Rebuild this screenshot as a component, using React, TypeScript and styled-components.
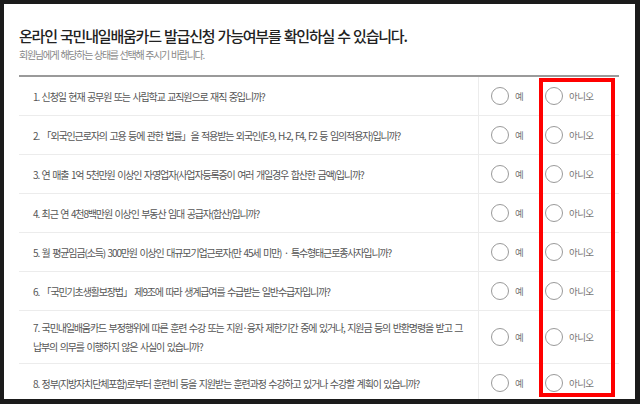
import styled, { createGlobalStyle } from 'styled-components';

const GlobalStyle = createGlobalStyle`
   html, body {
      margin: 0;
      padding: 0;
      background: #1b1b1b;
   }
   body {
      font-family: 'Noto Sans CJK KR', 'Noto Sans', sans-serif;
   }
`;

const questions: string[][] = [
   ['1. 신청일 현재 공무원 또는 사립학교 교직원으로 재직 중입니까?'],
   ['2. 「외국인근로자의 고용 등에 관한 법률」을 적용받는 외국인(E-9, H-2, F4, F2 등 임의적용자)입니까?'],
   ['3. 연 매출 1억 5천만원 이상인 자영업자(사업자등록증이 여러 개일경우 합산한 금액)입니까?'],
   ['4. 최근 연 4천8백만원 이상인 부동산 임대 공급자(합산)입니까?'],
   ['5. 월 평균임금(소득) 300만원 이상인 대규모기업근로자(만 45세 미만) · 특수형태근로종사자입니까?'],
   ['6. 「국민기초생활보장법」 제9조에 따라 생계급여를 수급받는 일반수급자입니까?'],
   [
      '7. 국민내일배움카드 부정행위에 따른 훈련 수강 또는 지원·융자 제한기간 중에 있거나, 지원금 등의 반환명령을 받고 그',
      '납부의 의무를 이행하지 않은 사실이 있습니까?',
   ],
   ['8. 정부(지방자치단체포함)로부터 훈련비 등을 지원받는 훈련과정 수강하고 있거나 수강할 계획이 있습니까?'],
];

const App = () => {
   return (
      <>
         <GlobalStyle />
         <Panel>
            <Title>온라인 국민내일배움카드 발급신청 가능여부를 확인하실 수 있습니다.</Title>
            <SubTitle>회원님에게 해당하는 상태를 선택해 주시기 바랍니다.</SubTitle>
            <List>
               {questions.map((lines, i) => (
                  <Row key={i}>
                     <Question>
                        <QuestionText>
                           {lines.map((line, j) => (
                              <span key={j}>
                                 {j > 0 && <br />}
                                 {line}
                              </span>
                           ))}
                        </QuestionText>
                     </Question>
                     <Choice $pad={12}>
                        <Circle />
                        <ChoiceLabel>예</ChoiceLabel>
                     </Choice>
                     <Choice $pad={6}>
                        <Circle />
                        <ChoiceLabel>아니오</ChoiceLabel>
                     </Choice>
                  </Row>
               ))}
            </List>
            <Highlight />
         </Panel>
      </>
   );
};
export default App;

const Panel = styled.div`
   position: relative;
   box-sizing: border-box;
   width: 631px;
   height: 395px;
   margin: 4px 0 0 4px;
   padding: 22px 16px 0 15px;
   background: #fff;
   overflow: hidden;
`;

const Title = styled.h1`
   margin: 0;
   font-size: 15px;
   line-height: 20px;
   font-weight: 500;
   letter-spacing: -1.2px;
   word-spacing: 1px;
   color: #222;
`;

const SubTitle = styled.p`
   margin: 2px 0 0;
   font-size: 10px;
   line-height: 14px;
   letter-spacing: -1.3px;
   word-spacing: 1px;
   color: #888;
`;

const List = styled.div`
   margin-top: 13px;
   border-top: 2px solid #9a9a9a;
`;

const Row = styled.div`
   display: grid;
   grid-template-columns: 460px 60px 80px;
   min-height: 38px;
   border-bottom: 1px solid #ececec;
`;

const Question = styled.div`
   display: flex;
   align-items: center;
   min-width: 0;
   padding: 7px 6px 7px 14px;
   border-right: 1px solid #ececec;
`;

const QuestionText = styled.p`
   margin: 0;
   font-size: 10px;
   line-height: 19px;
   letter-spacing: -1.15px;
   word-spacing: 1.5px;
   color: #555;
   white-space: nowrap;
`;

const Choice = styled.div<{ $pad: number }>`
   display: flex;
   align-items: center;
   gap: 6px;
   padding-left: ${p => p.$pad}px;
`;

const Circle = styled.span`
   box-sizing: border-box;
   width: 18px;
   height: 18px;
   border: 1px solid #9a9a9a;
   border-radius: 50%;
   background: #fff;
`;

const ChoiceLabel = styled.span`
   font-size: 9.5px;
   letter-spacing: -0.6px;
   color: #777;
`;

const Highlight = styled.div`
   position: absolute;
   left: 535px;
   top: 74px;
   width: 76px;
   height: 319px;
   box-sizing: border-box;
   border: 4px solid #ff0000;
   pointer-events: none;
`;
